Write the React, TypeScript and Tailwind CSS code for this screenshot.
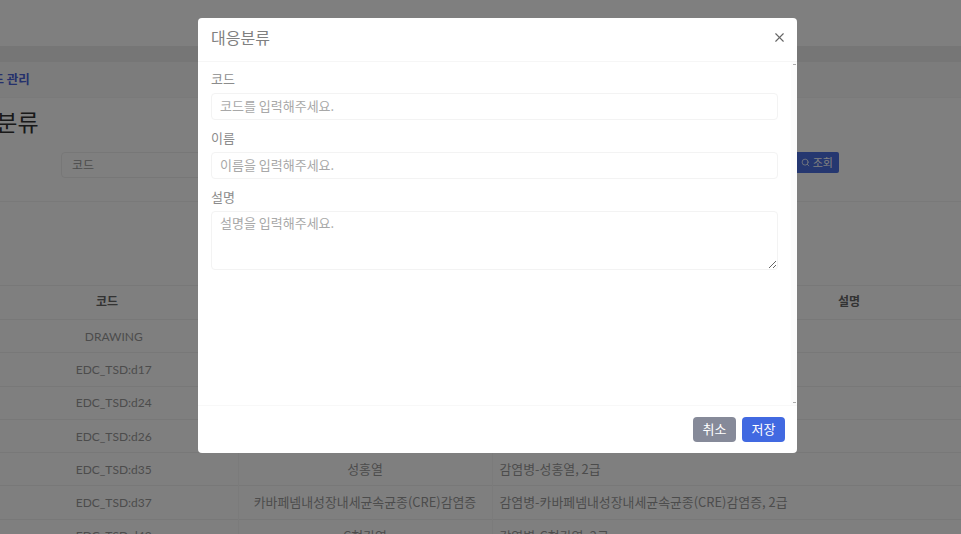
import React from "react";
import { Search, X } from "lucide-react";

const kr = "font-['Noto_Sans_CJK_KR','Noto_Sans',sans-serif]";

const rows = [
  ["DRAWING", "", ""],
  ["EDC_TSD:d17", "", ""],
  ["EDC_TSD:d24", "", ""],
  ["EDC_TSD:d26", "", ""],
  ["EDC_TSD:d35", "성홍열", "감염병-성홍열, 2급"],
  ["EDC_TSD:d37", "카바페넴내성장내세균속균종(CRE)감염증", "감염병-카바페넴내성장내세균속균종(CRE)감염증, 2급"],
  ["EDC_TSD:d42", "C형간염", "감염병-C형간염, 2급"],
];

function Page() {
  return (
    <div className="flex h-full flex-col bg-white text-[#333]">
      <div className="h-[46px] shrink-0 bg-white" />
      <div className="h-[16px] shrink-0 bg-[#ececec]" />
      <div className="flex h-[36px] shrink-0 items-center justify-start border-b border-[#f4f4f4] bg-[#f9f9f9]">
        <span className="-ml-[19px] text-[12.5px] font-bold text-[#4a62d8]">코드 관리</span>
      </div>
      <div className="-ml-[46px] flex h-[50px] shrink-0 items-center pb-[4px] text-[23px] text-[#333]">대응분류</div>
      <div className="flex h-[54px] shrink-0 items-start justify-between border-b border-[#f3f3f3] pt-[4px] pr-[122px] pl-[61px]">
        <div className="flex h-[26px] w-[200px] items-center rounded-[4px] border border-[#eeeeee] px-[10px] text-[12px] text-[#999]">코드</div>
        <div className="flex h-[21px] w-[60px] items-center justify-end gap-[3px] rounded-[2px] bg-[#4a6fe0] pr-[6px] text-[11px] text-white">
          <Search size={9} strokeWidth={2} />
          <span>조회</span>
        </div>
      </div>
      <div className="h-[83px] shrink-0" />
      <table className="-ml-[24px] w-[1230px] shrink-0 table-fixed border-collapse text-[13px]">
        <colgroup>
          <col className="w-[262px]" />
          <col className="w-[254px]" />
          <col className="w-[714px]" />
        </colgroup>
        <thead>
          <tr className="h-[34px] border-y border-[#f1f1f1] text-[12px] font-bold text-[#666]">
            <th className="pb-[3px]">코드</th>
            <th className="pb-[3px]">이름</th>
            <th className="pb-[3px]">설명</th>
          </tr>
        </thead>
        <tbody>
          {rows.map((r) => (
            <tr key={r[0]} className="h-[33.3px] border-b border-[#f1f1f1] text-[#999]">
              <td className="pt-[1px] pl-[14px] text-center font-['Lato','Noto_Sans',sans-serif] text-[12px]">{r[0]}</td>
              <td className="border-l border-[#f6f6f6] pb-[1px] text-center text-[12.9px]">{r[1]}</td>
              <td className="border-l border-[#f6f6f6] pb-[1px] pl-[7px] text-[12.9px]">{r[2]}</td>
            </tr>
          ))}
        </tbody>
      </table>
    </div>
  );
}

function Field({ label, placeholder }: { label: string; placeholder: string }) {
  return (
    <div className="flex flex-col">
      <label className="mb-[5px] h-[19px] text-[13px] leading-[19px] text-[#8c8c8c]">{label}</label>
      <input
        placeholder={placeholder}
        className="h-[27px] w-full rounded-[4px] border border-[#f3f3f3] bg-white px-[8px] pb-[3px] text-[13px] outline-none placeholder:text-[#a8a8a8]"
      />
    </div>
  );
}

export default function App() {
  return (
    <div className={`relative h-[534px] w-[961px] overflow-hidden ${kr}`}>
      <Page />
      <div className="absolute inset-0 bg-black/50 pt-[18px] pl-[198px]">
        <div className="flex h-[435px] w-[599px] flex-col rounded-[4px] bg-white">
          <div className="flex h-[44px] shrink-0 items-center justify-between border-b border-[#f6f6f6] pr-[10px] pb-[5px] pl-[13px]">
            <h2 className="text-[16px] text-[#808080]">대응분류</h2>
            <X size={15} strokeWidth={1.8} className="text-[#666]" />
          </div>
          <div className="flex h-[343px] shrink-0">
            <div className="flex flex-1 flex-col gap-[8px] pt-[7px] pr-[13px] pl-[13px]">
              <Field label="코드" placeholder="코드를 입력해주세요." />
              <Field label="이름" placeholder="이름을 입력해주세요." />
              <div className="flex flex-col">
                <label className="mb-[5px] h-[19px] text-[13px] leading-[19px] text-[#8c8c8c]">설명</label>
                <textarea
                  placeholder="설명을 입력해주세요."
                  className="h-[59px] w-full rounded-[4px] border border-[#f3f3f3] bg-white px-[8px] pt-[1px] pb-0 text-[13px] leading-[20px] outline-none placeholder:text-[#a8a8a8]"
                />
              </div>
            </div>
            <div className="flex w-[6px] flex-col items-center justify-between bg-[#fcfcfc] py-[2px]">
              <div className="h-[1px] w-[3px] bg-[#aaa]" />
              <div className="h-[1px] w-[3px] bg-[#aaa]" />
            </div>
          </div>
          <div className="flex flex-1 items-center justify-end gap-[6px] border-t border-[#f8f8f8] pr-[12px]">
            <button className="h-[25px] w-[43px] rounded-[4px] bg-[#868a99] pb-[2px] text-[13px] text-white">취소</button>
            <button className="h-[25px] w-[43px] rounded-[4px] bg-[#4169e1] pb-[2px] text-[13px] text-white">저장</button>
          </div>
        </div>
      </div>
    </div>
  );
}
